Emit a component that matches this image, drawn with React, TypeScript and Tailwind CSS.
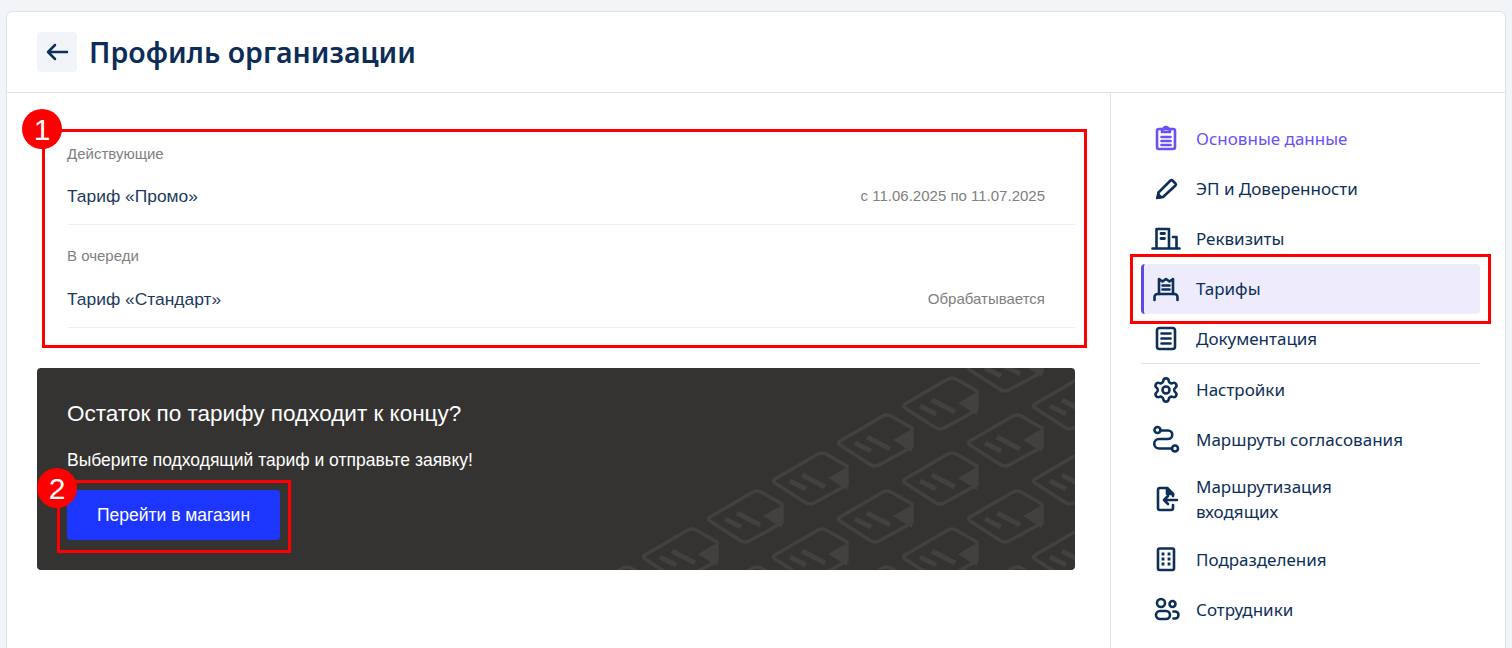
import type { ReactNode } from 'react';
import { Settings } from 'lucide-react';

const navFont = "font-['Noto_Sans',sans-serif]";

function Icon({ children, className = 'text-[#0d2f58]' }: { children: ReactNode; className?: string }) {
  return (
    <svg
      viewBox="0 0 32 32"
      fill="none"
      stroke="currentColor"
      strokeWidth="2.6"
      strokeLinecap="round"
      strokeLinejoin="round"
      className={`w-8 h-8 shrink-0 ${className}`}
    >
      {children}
    </svg>
  );
}

const icons = {
  clipboard: (
    <>
      <rect x="7" y="6" width="18" height="20" rx="2" />
      <path d="M12 6h2a2 2 0 0 1 4 0h2v3h-8z" />
      <path d="M11.500 14h9M11.500 18h9M11.500 22h9" />
    </>
  ),
  pencil: (
    <>
      <path d="M20.500 7.500a1.500 1.500 0 0 1 2 0l3 3a1.500 1.500 0 0 1 0 2L13 24l-5 .500.500-5z" />
      <path d="M6.500 25.500l1.200-6 4.800 4.800z" fill="currentColor" strokeWidth="1" />
    </>
  ),
  building: (
    <>
      <path d="M2.500 25.500h27" />
      <path d="M6.500 25V6h12.500v19" />
      <path d="M11 10.500h3.500M11 15.500h3.500" strokeWidth="2.800" />
      <path d="M23 14h3.500v11" />
    </>
  ),
  tariff: (
    <>
      <path d="M9 21V6l3.500 2.500L16 6l3.500 2.500L23 6v15" />
      <path d="M4.500 27v-3a3 3 0 0 1 3-3h17a3 3 0 0 1 3 3v3" />
      <path d="M12.500 12.500h7M12.500 16.500h7" />
    </>
  ),
  doc: (
    <>
      <rect x="7" y="5" width="18" height="21" rx="2.500" />
      <path d="M11.500 10.500h9M11.500 15.500h9M11.500 20.500h9" />
    </>
  ),
  route: (
    <>
      <circle cx="7.500" cy="6" r="3" />
      <circle cx="25" cy="24.500" r="3" />
      <path d="M10.500 6.500H18a4.250 4.250 0 0 1 0 8.500H9a4.700 4.700 0 0 0 0 9.500h13" />
    </>
  ),
  fileIn: (
    <>
      <path d="M23 21v3a2 2 0 0 1-2 2H10a2 2 0 0 1-2-2V6a2 2 0 0 1 2-2h7l6 6v2" />
      <path d="M17 4l6 6h-6z" fill="currentColor" />
      <path d="M27 16H14M18 12l-4 4 4 4" />
    </>
  ),
  grid: (
    <>
      <rect x="8" y="4.500" width="16" height="21.500" rx="1.500" />
      <path d="M13 10h.01M19 10h.01M13 15h.01M19 15h.01M13 20h.01M19 20h.01" strokeWidth="2.800" strokeLinecap="square" />
    </>
  ),
  people: (
    <>
      <circle cx="11" cy="9" r="4" />
      <circle cx="22.500" cy="10" r="3" />
      <rect x="6" y="17" width="14" height="8" rx="4" />
      <path d="M23.500 17.500h1.500a3.500 3.500 0 0 1 0 7h-1.500" />
    </>
  ),
};

// tile positions on the banner, taken from the reference
const tiles: [number, number][] = [
  [1005, 365],
  [940, 403], [1070, 403],
  [875, 440], [1005, 440],
  [810, 478], [940, 478], [1070, 478],
  [745, 516], [875, 516], [1005, 516],
  [680, 554], [810, 554], [940, 554], [1070, 554],
  [615, 592], [745, 592], [875, 592], [1005, 592],
];

function BannerPattern() {
  return (
    <svg viewBox="0 0 1038 202" className="absolute inset-0 w-full h-full pointer-events-none">
      {tiles.map(([cx, cy]) => (
        <g key={`${cx}-${cy}`} transform={`translate(${cx - 38 - 37} ${cy - 26 - 368})`} stroke="#42413f" fill="none">
          <path d="M3 27 L46 2 Q50 0 54 2 L75 14 V33 L42 51 Q38 53 34 51 L3 31 Q0 29 3 27Z" strokeWidth="3.500" strokeLinejoin="round" />
          <path d="M56 26 L75 15 V38Z" fill="#42413f" stroke="none" />
          <path d="M30 23 L53 35 M18 29 L34 37" strokeWidth="5" />
        </g>
      ))}
    </svg>
  );
}

function TariffGroup({ label, name, note, labelGap }: { label: string; name: string; note: string; labelGap: string }) {
  return (
    <div>
      <p className={`text-[15px] leading-5 text-[#808080] ${labelGap}`}>{label}</p>
      <div className="h-14 flex items-center justify-between border-b border-[#eeeefb] pr-[30px]">
        <span className="text-[17.400px] text-[#1c3a5e]">{name}</span>
        <span className="text-[15px] text-[#808080]">{note}</span>
      </div>
    </div>
  );
}

function NavItem({ icon, label, active, current, tall }: {
  icon: ReactNode;
  label: ReactNode;
  active?: boolean;
  current?: boolean;
  tall?: boolean;
}) {
  return (
    <div
      className={`flex items-center gap-[14px] pl-[9px] rounded-[4px] ${tall ? 'h-[70px]' : 'h-[50px]'} ${
        current ? 'bg-[#eeebfc] border-l-[3px] border-[#5f4bdb] !pl-[6px]' : ''
      }`}
    >
      {icon}
      <span className={`text-[17px] leading-[25px] pb-[2px] ${active ? 'text-[#6d50f5]' : 'text-[#0d2f58]'}`}>{label}</span>
    </div>
  );
}

function Marker({ className, n }: { className: string; n: number }) {
  return (
    <div className={`absolute w-10 h-10 rounded-full bg-[#ff0000] text-white text-[30px] flex items-center justify-center font-['Liberation_Sans',sans-serif] ${className}`}>
      {n}
    </div>
  );
}

export default function App() {
  return (
    <div className="relative h-[648px] overflow-hidden bg-[#f2f5f8] pt-[11px] px-[6px] font-['Liberation_Sans',sans-serif]">
      <div className="h-full bg-white border border-b-0 border-[#dde3ea] rounded-t-md">
        {/* Header */}
        <div className="h-[81px] flex items-center gap-[12px] pl-[30px] border-b border-[#dde3ea]">
          <button className="w-10 h-10 rounded-[4px] bg-[#f1f4f8] flex items-center justify-center text-[#0d2f58]">
            <svg viewBox="0 0 24 24" fill="none" stroke="currentColor" strokeWidth="2.500" strokeLinecap="round" strokeLinejoin="round" className="w-6 h-6">
              <path d="M22 12H3M10 5l-7 7 7 7" />
            </svg>
          </button>
          <h1 className={`text-[28.500px] font-semibold text-[#0c2d57] ${navFont}`}>Профиль организации</h1>
        </div>

        <div className="flex">
          {/* Main column */}
          <div className="w-[1104px] border-r border-[#dde3ea] pl-[30px] pr-[35px] pt-[51px] h-[600px]">
            <div className="pl-[30px] flex flex-col gap-[21px]">
              <TariffGroup label="Действующие" name="Тариф «Промо»" note="с 11.06.2025 по 11.07.2025" labelGap="mb-[5px]" />
              <TariffGroup label="В очереди" name="Тариф «Стандарт»" note="Обрабатывается" labelGap="mb-[6px]" />
            </div>

            <div className="relative mt-10 h-[202px] rounded-[4px] bg-[#353331] overflow-hidden p-[30px] pt-[31px] text-white">
              <BannerPattern />
              <div className="relative">
                <h2 className="text-[22.500px] leading-[30px]">Остаток по тарифу подходит к концу?</h2>
                <p className="text-[17.500px] leading-6 mt-[19px]">Выберите подходящий тариф и отправьте заявку!</p>
                <button className="mt-[18px] w-[213px] h-[50px] rounded-[4px] bg-[#1c36ff] text-[17.500px]">Перейти в магазин</button>
              </div>
            </div>
          </div>

          {/* Side nav */}
          <div className={`flex-1 pl-[30px] pr-[25px] pt-[21px] ${navFont}`}>
            <NavItem active icon={<Icon className="text-[#6d50f5]">{icons.clipboard}</Icon>} label="Основные данные" />
            <NavItem icon={<Icon>{icons.pencil}</Icon>} label="ЭП и Доверенности" />
            <NavItem icon={<Icon>{icons.building}</Icon>} label="Реквизиты" />
            <NavItem current icon={<Icon>{icons.tariff}</Icon>} label="Тарифы" />
            <NavItem icon={<Icon>{icons.doc}</Icon>} label="Документация" />
            <div className="border-t border-[#dde3ea] -mt-px mb-px" />
            <NavItem icon={<span className="w-8 h-8 shrink-0 flex items-center justify-center text-[#0d2f58]"><Settings size={28} strokeWidth={2.2} /></span>} label="Настройки" />
            <NavItem icon={<Icon>{icons.route}</Icon>} label="Маршруты согласования" />
            <NavItem tall icon={<Icon>{icons.fileIn}</Icon>} label={<>Маршрутизация<br />входящих</>} />
            <NavItem icon={<Icon>{icons.grid}</Icon>} label="Подразделения" />
            <NavItem icon={<Icon>{icons.people}</Icon>} label="Сотрудники" />
          </div>
        </div>
      </div>

      {/* Red annotations over the page */}
      <div className="absolute left-[42px] top-[129px] w-[1045px] h-[219px] border-[3px] border-[#ff0000]" />
      <div className="absolute left-[1130px] top-[254px] w-[361px] h-[70px] border-[3px] border-[#ff0000]" />
      <div className="absolute left-[57px] top-[480px] w-[234px] h-[73px] border-[3px] border-[#ff0000]" />
      <Marker n={1} className="left-[22px] top-[109px]" />
      <Marker n={2} className="left-[37px] top-[468px]" />
    </div>
  );
}
